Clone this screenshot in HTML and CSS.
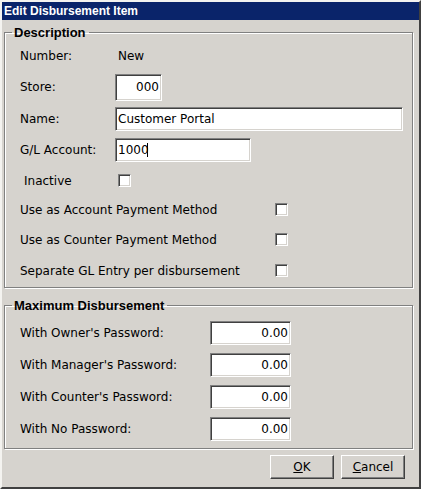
FILE: index.html
```html
<!DOCTYPE html>
<html lang="en">
<head>
  <meta charset="UTF-8" />
  <title>Edit Disbursement Item</title>
  <link rel="stylesheet" href="styles.css">
</head>
<body>
  <div class="window">
    <div class="title-bar">Edit Disbursement Item</div>

    <div class="dialog">
      <fieldset class="group">
        <legend>Description</legend>
        <div class="grid desc-grid">
          <span class="label">Number:</span>
          <span class="value">New</span>

          <span class="label">Store:</span>
          <input type="text" class="field store-field" value="000">

          <span class="label">Name:</span>
          <input type="text" class="field name-field" value="Customer Portal">

          <span class="label">G/L Account:</span>
          <div class="gl-wrap">
            <input type="text" class="field gl-field" value="1000"><span class="caret"></span>
          </div>

          <span class="label inactive-label">Inactive</span>
          <span class="check inactive-check"></span>

          <span class="label wide">Use as Account Payment Method</span>
          <span class="check wide-check"></span>

          <span class="label wide">Use as Counter Payment Method</span>
          <span class="check wide-check"></span>

          <span class="label wide">Separate GL Entry per disbursement</span>
          <span class="check wide-check"></span>
        </div>
      </fieldset>

      <fieldset class="group max-group">
        <legend>Maximum Disbursement</legend>
        <div class="grid max-grid">
          <span class="label">With Owner's Password:</span>
          <input type="text" class="field amount-field" value="0.00">

          <span class="label">With Manager's Password:</span>
          <input type="text" class="field amount-field" value="0.00">

          <span class="label">With Counter's Password:</span>
          <input type="text" class="field amount-field" value="0.00">

          <span class="label">With No Password:</span>
          <input type="text" class="field amount-field" value="0.00">
        </div>
      </fieldset>

      <div class="buttons">
        <button class="btn"><u>O</u>K</button>
        <button class="btn"><u>C</u>ancel</button>
      </div>
    </div>
  </div>
</body>
</html>
```

FILE: styles.css
```css
body {
    margin: 0;
    background-color: #ffffff;
    font-family: "DejaVu Sans", sans-serif;
    font-size: 12px;
    color: #000000;
}
.window {
    width: 417px;
    height: 485px;
    border-top: 2px solid #f4f3f0;
    border-left: 2px solid #f4f3f0;
    border-right: 2px solid #404040;
    border-bottom: 2px solid #404040;
    background-color: #d6d3ce;
    display: flex;
    flex-direction: column;
}
.title-bar {
    height: 18px;
    background-color: #0a246a;
    color: white;
    font-family: "Liberation Sans", Arial, sans-serif;
    font-weight: bold;
    font-size: 12px;
    line-height: 18px;
    padding-left: 2px;
}
.dialog {
    padding: 5px 6px 0 2px;
    display: flex;
    flex-direction: column;
}
.group {
    margin: 0;
    padding: 0 0 0 15px;
    border: 1px solid #808080;
    box-shadow: inset 1px 1px #ffffff, 1px 1px #ffffff;
    min-width: 0;
}
.group legend {
    font-family: "Liberation Sans", Arial, sans-serif;
    font-weight: bold;
    font-size: 13px;
    padding: 0 3px 0 2px;
    margin-left: -8px;
}
.grid {
    display: grid;
    grid-template-columns: 95px 1fr;
    align-items: center;
}
.desc-grid {
    grid-template-rows: 31px 32px 31px 32px 29px 29px 31px 31px;
    padding-top: 0;
    padding-bottom: 1px;
}
.max-group {
    margin-top: 10px;
}
.max-grid {
    grid-template-columns: 190px 1fr;
    grid-template-rows: 32px 32px 32px 32px;
    padding-top: 4px;
    padding-bottom: 3px;
}
.label {
    white-space: nowrap;
}
.value {
    padding-left: 3px;
}
.inactive-label {
    padding-left: 4px;
}
.field {
    box-sizing: border-box;
    height: 24px;
    margin: 0;
    padding: 0 2px;
    font-family: "DejaVu Sans", sans-serif;
    font-size: 12px;
    background: white;
    border: 1px solid;
    border-color: #808080 #ffffff #ffffff #808080;
    box-shadow: inset 1px 1px #404040, inset -1px -1px #d6d3ce;
    outline: none;
}
.store-field {
    width: 47px;
    height: 27px;
    text-align: right;
}
.name-field {
    width: 288px;
}
.gl-wrap {
    position: relative;
    width: 136px;
}
.gl-field {
    width: 136px;
}
/* text cursor after the account number */
.caret {
    position: absolute;
    left: 32px;
    top: 5px;
    width: 1px;
    height: 14px;
    background: black;
}
.amount-field {
    width: 81px;
    text-align: right;
}
.check {
    box-sizing: border-box;
    width: 13px;
    height: 13px;
    background: white;
    border: 1px solid;
    border-color: #808080 #ffffff #ffffff #808080;
    box-shadow: inset 1px 1px #404040, inset -1px -1px #d6d3ce;
}
.inactive-check {
    margin-left: 3px;
}
.wide {
    grid-column: 1;
}
.wide-check {
    margin-left: 160px;
}
.buttons {
    display: flex;
    justify-content: flex-end;
    gap: 7px;
    padding: 6px 8px 0 0;
}
.btn {
    width: 64px;
    height: 24px;
    background: #d6d3ce;
    font-family: "DejaVu Sans", sans-serif;
    font-size: 12px;
    border: 1px solid;
    border-color: #ffffff #404040 #404040 #ffffff;
    box-shadow: inset -1px -1px #808080;
    padding: 0;
}
```
